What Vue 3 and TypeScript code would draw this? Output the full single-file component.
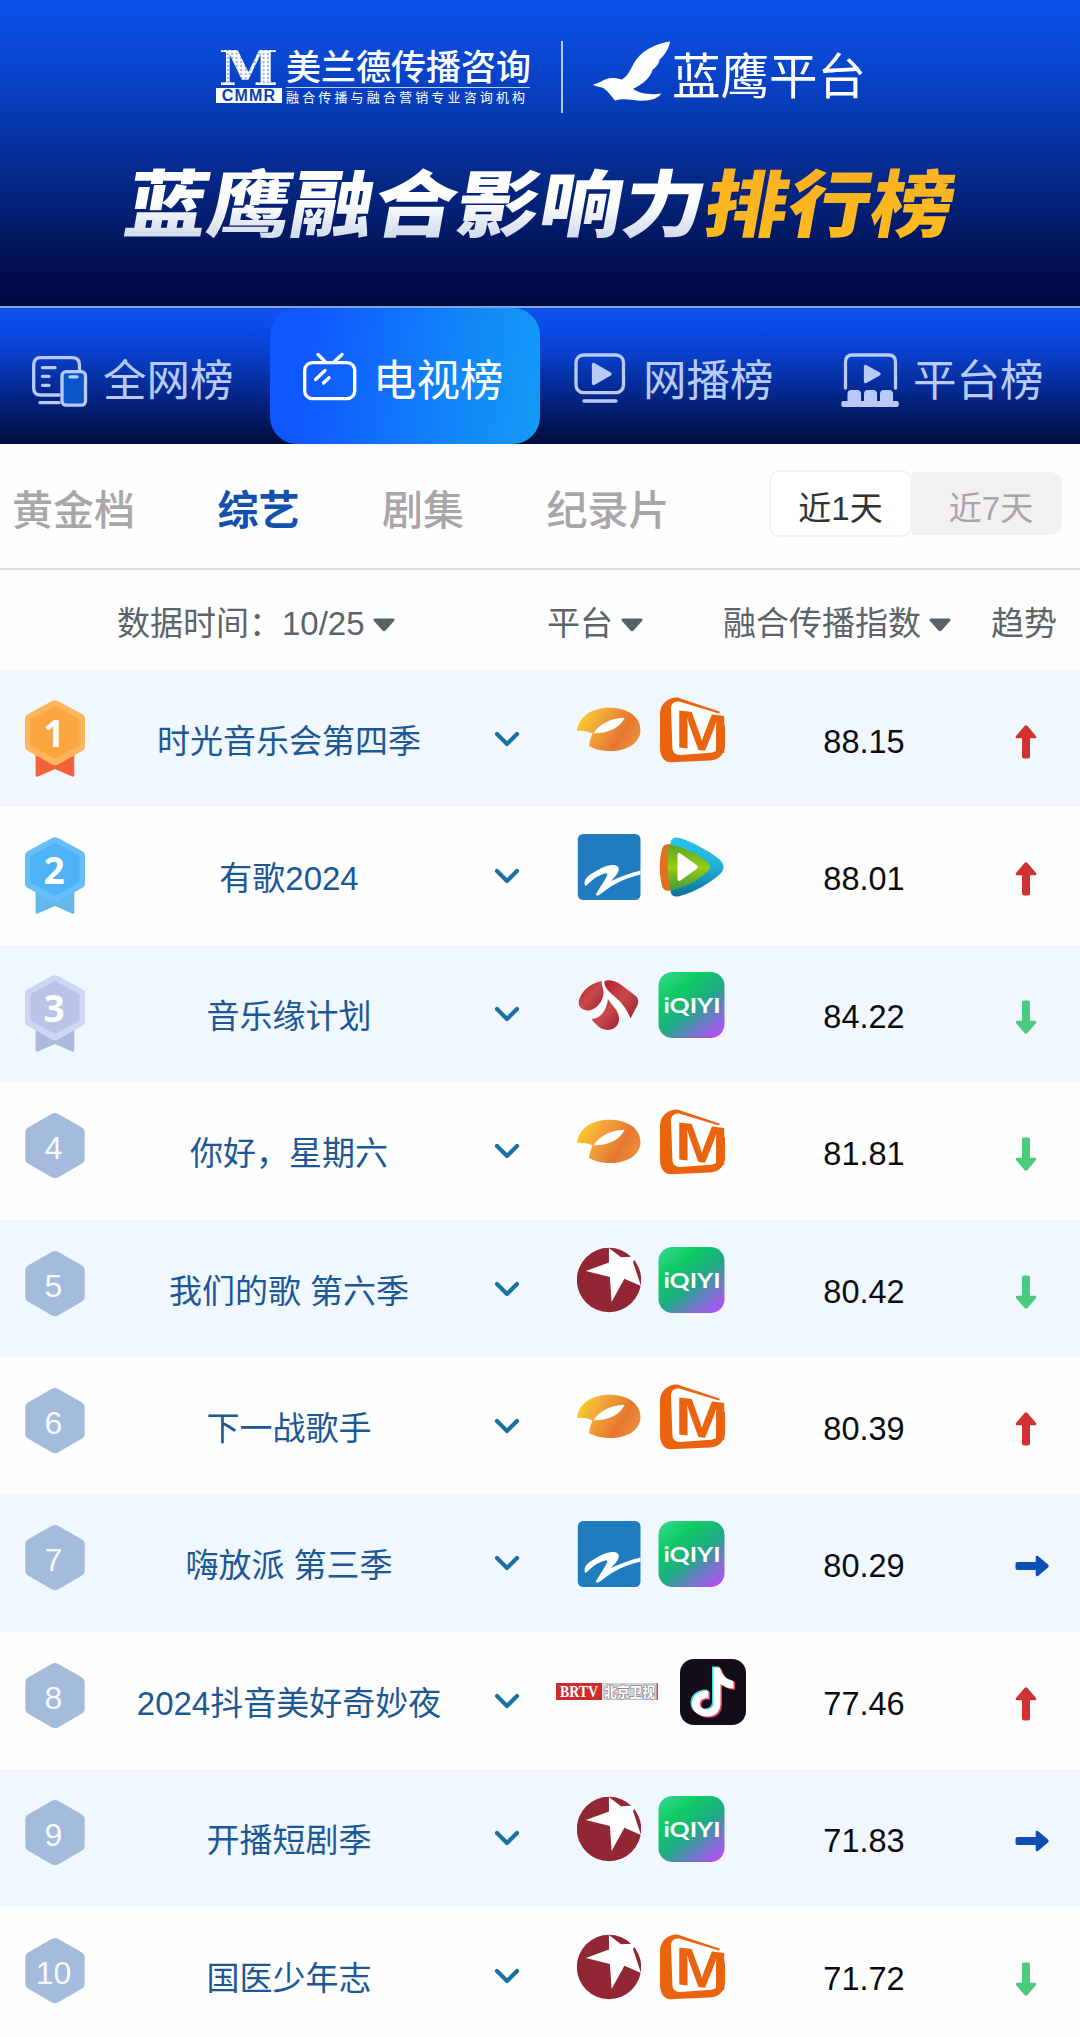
<template>
  <div class="page">
    <!-- Shared gradients -->
    <svg class="defs" width="0" height="0" aria-hidden="true">
      <defs>
        <linearGradient id="g-hunan" x1="0" y1="0.2" x2="1" y2="0.6">
          <stop offset="0" stop-color="#fbd325" />
          <stop offset="0.35" stop-color="#f2a43a" />
          <stop offset="0.75" stop-color="#e5772f" />
          <stop offset="1" stop-color="#ef8d3c" />
        </linearGradient>
        <linearGradient id="g-iqiyi" x1="0.1" y1="0" x2="0.9" y2="1">
          <stop offset="0" stop-color="#35d58c" />
          <stop offset="0.25" stop-color="#0fcc63" />
          <stop offset="0.55" stop-color="#1faa86" />
          <stop offset="0.75" stop-color="#6b7cc4" />
          <stop offset="1" stop-color="#b84cf7" />
        </linearGradient>
        <linearGradient id="g-tx-blue" x1="0" y1="0" x2="0" y2="1">
          <stop offset="0" stop-color="#2cc4e6" />
          <stop offset="0.5" stop-color="#21b0d8" />
          <stop offset="1" stop-color="#0b6f96" />
        </linearGradient>
        <linearGradient id="g-tx-green" x1="0" y1="0" x2="0" y2="1">
          <stop offset="0" stop-color="#57a71c" />
          <stop offset="0.5" stop-color="#98cb14" />
          <stop offset="1" stop-color="#3d9a3c" />
        </linearGradient>
        <linearGradient id="g-anhui" x1="0" y1="0" x2="1" y2="1">
          <stop offset="0" stop-color="#b3202c" />
          <stop offset="0.5" stop-color="#c9484c" />
          <stop offset="1" stop-color="#9c1f2c" />
        </linearGradient>
      </defs>
    </svg>

    <!-- Header -->
    <header class="banner">
      <div class="brands">
        <div class="cmmr">
          <span class="cmmr-m">M</span>
          <span class="cmmr-tag">CMMR</span>
        </div>
        <div class="company">
          <span class="company-name">美兰德传播咨询</span>
          <span class="company-sub">融合传播与融合营销专业咨询机构</span>
        </div>
        <i class="brand-divider"></i>
        <svg class="eagle" viewBox="0 0 80 62" width="80" height="62">
          <path fill="#fff" d="M78 1.500C66 3 53 9 45.500 18C39 26 38 35 30 39.500C24 37.500 17 37 12 40C8 42 5 44 0.800 44.500C4 47 9 46.500 12 48.500C17 52 19 56 23 60.500C34 57 42 61.500 54 60.500C61 60 66 58 69.500 53.500C60 55 48 54 41 49C51 44 58 38 60.500 30C66 25 67 23 67.500 19.500C73 15 77 8 78 1.500Z" />
        </svg>
        <span class="platform-name">蓝鹰平台</span>
      </div>
      <h1><span class="silver">蓝鹰融合影响力</span><span class="gold">排行榜</span></h1>
    </header>

    <!-- Main tabs -->
    <nav class="main-tabs">
      <div
        v-for="tab in mainTabs"
        :key="tab.key"
        :class="['main-tab', { active: tab.key === activeMain }]"
        @click="activeMain = tab.key"
      >
        <svg class="tab-icon" viewBox="0 0 60 56" width="60" height="56">
          <g v-if="tab.key === 'all'">
            <path d="M29 43H10.500Q3.700 43 3.700 36V13Q3.700 5.700 10.500 5.700H42Q49.500 5.700 49.500 13V18M12.500 15.700H25M12.500 24.300H19M12.500 33.300H19M10 50.700H29" />
            <rect x="32" y="19.700" width="23.500" height="33.500" rx="4" fill="#0b56c6" />
            <path d="M40 24.800H47" />
          </g>
          <g v-else-if="tab.key === 'tv'">
            <rect x="4.700" y="10.600" width="50" height="36" rx="7.500" />
            <path d="M18 2.500L25 9.500M42 2.500L34.500 9.500M25 18.500L15.500 27.500M29 25.700L23.500 31" />
          </g>
          <g v-else-if="tab.key === 'web'">
            <rect x="6" y="3" width="47.500" height="37.700" rx="7.500" />
            <path d="M14 49H46" />
            <path class="solid" d="M23.500 12.500L40 22L23.500 31.500Z" />
          </g>
          <g v-else>
            <path d="M5.500 36V10Q5.500 3 12.500 3H48.500Q55.500 3 55.500 10V36" />
            <path class="solid" d="M25.500 14.500L39 22L25.500 29.500Z" />
            <path class="fill" d="M7.500 50V42Q7.500 38 11.500 38H17Q21 38 21 42V50ZM24 50V42Q24 38 28 38H33Q37 38 37 42V50ZM40 50V42Q40 38 44 38H49Q53 38 53 42V50Z" />
            <rect class="fill" x="1.300" y="49" width="57.500" height="6" rx="2" />
          </g>
        </svg>
        <span class="tab-label">{{ tab.label }}</span>
      </div>
    </nav>

    <!-- Category tabs -->
    <section class="sub-bar">
      <div class="sub-tabs">
        <span
          v-for="name in categories"
          :key="name"
          :class="['sub-tab', { active: name === activeCategory }]"
          @click="activeCategory = name"
        >{{ name }}</span>
      </div>
      <div class="range">
        <button
          v-for="days in [1, 7]"
          :key="days"
          :class="{ active: days === range }"
          @click="range = days"
        >近{{ days }}天</button>
      </div>
    </section>

    <!-- Table header -->
    <div class="table-head">
      <div>数据时间：<span>10/25</span><svg class="caret" viewBox="0 0 22 14"><path :d="caret" /></svg></div>
      <div>平台<svg class="caret" viewBox="0 0 22 14"><path :d="caret" /></svg></div>
      <div>融合传播指数<svg class="caret" viewBox="0 0 22 14"><path :d="caret" /></svg></div>
      <div>趋势</div>
    </div>

    <!-- Ranking -->
    <div class="ranking">
      <div v-for="(show, i) in shows" :key="show.title" class="row">
        <div class="rank">
          <svg v-if="i < 3" viewBox="0 0 60 78" width="60" height="78">
            <path :fill="medals[i].ribbon" d="M10.600 52H49.300V76Q48 77.500 46 76L30 69L14 76Q11.500 77.500 10.600 76Z" />
            <path :fill="medals[i].edge" d="M27 1Q30 -0.500 33 1L57 14Q60 15.500 60 19V46Q60 49.500 57 51L33 64.500Q30 66 27 64.500L3 51Q0 49.500 0 46V19Q0 15.500 3 14Z" />
            <path :fill="medals[i].face" d="M30 6L54.500 19V45.500L30 59L5.500 45.500V19Z" />
            <text class="medal-num" x="29" y="46.500">{{ i + 1 }}</text>
          </svg>
          <svg v-else viewBox="0 0 60 78" width="60" height="78">
            <path fill="#a4bbdb" d="M27 1.800Q30 0.300 33 1.800L57 15.500Q59.700 17 59.700 20V47Q59.700 50 57 51.500L33 65.500Q30 67 27 65.500L3 51.500Q0.300 50 0.300 47V20Q0.300 17 3 15.500Z" />
            <text class="hex-num" x="28.500" y="47">{{ i + 1 }}</text>
          </svg>
        </div>
        <div class="title">{{ show.title }}</div>
        <div class="expand">
          <svg viewBox="0 0 26 16" width="26" height="16"><path d="M3 3L13 13L23 3" /></svg>
        </div>
        <div class="logos">
          <template v-for="logo in show.logos" :key="logo">
            <svg v-if="logo === 'hunan'" class="logo narrow" viewBox="0 0 64 67">
              <path d="M16.500 36.300C22 27 34 21 47.400 20.700C44 30 32 36.500 16.500 36.300Z" fill="#fff" />
              <path fill="url(#g-hunan)" fill-rule="evenodd" d="M0 34C2 18 16 10.700 33 10.700C51 10.700 63.500 20 63.500 33C63.500 46 50 54 34 54C25 54 17 52 12 49C12.500 44 14 40 15.500 36.500C10 34 5 33.500 0 34ZM16.500 36.300C32 36.500 44 30 47.400 20.700C34 21 22 27 16.500 36.300Z" />
            </svg>

            <svg v-else-if="logo === 'mango'" class="logo" viewBox="0 0 67 67">
              <path d="M20 3L58 16L64 22V48L54 60L14 62L6 50V12Z" fill="#fff" />
              <text class="mango-m" transform="translate(17 50) skewY(7)" textLength="53.500" lengthAdjust="spacingAndGlyphs">M</text>
              <path fill="#ea6410" d="M62 14.700L21 1C15 -1 2 4 2 17V51C2 59 6 65.300 13 65.300L52 63.500C62 63 67 56 67 48V28L62 31V46C62 51 59 55 53 55.700L22 58C17 58 14.600 55 14.400 51L13 12C13 7 16 4 21 4.600L61 16.500Z" />
            </svg>

            <svg v-else-if="logo === 'zhejiang'" class="logo narrow" viewBox="0 0 64 67">
              <rect x="0.800" width="62.700" height="66" rx="5.500" fill="#1f7cbe" />
              <path fill="#fff" d="M7.800 51C6.500 45 11 41.500 19 37C27 32.500 33 30 39 31.500C43.500 33 42 38 38.500 42L34 47C42 43.500 52 39 63.500 36.500V40.500C51 43.500 42 47.500 34 52.500C28 56.500 25 59.500 21 61.500C19.500 62 18.500 61.200 19.300 59.500L28 45.500C30 42 31.500 39.800 29 39.300C22 40.500 15 46 10.500 50.500C9.500 51.800 8 52 7.800 51Z" />
            </svg>

            <svg v-else-if="logo === 'tencent'" class="logo" viewBox="0 0 67 67">
              <path fill="url(#g-tx-blue)" d="M12.500 9C13 4 17 2.500 22 4C37 9 51 17 61 25C67 30 67 36 61 41C51 49.500 37 58 22 62C17 63.500 13 62 12.500 57C10 41 10 25 12.500 9Z" />
              <path fill="#e2701e" d="M4 15C5 11 8 9.500 12.500 10.500L22 14V53L12.500 56.500C8 57.500 5 56 4 52C1 40 1 27 4 15Z" />
              <path fill="url(#g-tx-green)" d="M11 10.500C26 13 39 20 49 28C53 31 53 35 49 38C39 47 26 54 13 56.500C9 42 9 24 11 10.500Z" />
              <path fill="#fff" d="M19.500 21C19.500 19 21 18.500 22.500 19.500L38.500 31C40 32.300 40 34 38.500 35L22.500 46.500C21 47.500 19.500 47 19.500 45Z" />
            </svg>

            <svg v-else-if="logo === 'anhui'" class="logo narrow" viewBox="0 0 64 67">
              <path d="M25 10L28 9L36 24L53 44L40 46L20 48L12 42L26 34Z" fill="#fff" />
              <g fill="url(#g-anhui)">
                <path d="M25 9C14 11 4 19 1.800 29C0.500 36 8 40 14 38C22 35 27 27 26.500 19C26 15 24 13 25 9Z" />
                <path d="M27.500 9.500C31 7 38 9 43 12L59 24C61.500 27 62 30 60 34L53.500 46.500C50 37 44 30 37 24C31 19 26.500 14 27.500 9.500Z" />
                <path d="M31 27C35 34 42 38 42 47C42 54 36 58.500 30 58C23 57 19 53 14.500 47C22 47 29 41 31 27Z" />
              </g>
            </svg>

            <svg v-else-if="logo === 'iqiyi'" class="logo" viewBox="0 0 67 67">
              <rect x="0.500" width="66" height="66" rx="14" fill="url(#g-iqiyi)" />
              <text class="iqiyi-text" x="5.500" y="41.300" textLength="57" lengthAdjust="spacingAndGlyphs">iQIYI</text>
            </svg>

            <svg v-else-if="logo === 'dragon'" class="logo narrow" viewBox="0 0 64 67">
              <circle cx="32" cy="33" r="32.200" fill="#912734" />
              <path fill="#fff" d="M31.900 1L44 10.200L59 9.500L56 15L64 39L47.400 31.700L34.600 55L32.900 30L8.800 24L32 15.500Z" />
            </svg>

            <svg v-else-if="logo === 'brtv'" class="logo brtv" viewBox="0 0 102 17">
              <rect width="102" height="17" fill="#d2d2d4" />
              <rect width="46" height="17" fill="#cf2b2c" />
              <rect x="100.500" width="1.500" height="17" fill="#cf4b4c" />
              <text class="brtv-text" x="4" y="14" textLength="38" lengthAdjust="spacingAndGlyphs">BRTV</text>
              <text class="brtv-cn" x="48" y="13.700" textLength="51" lengthAdjust="spacingAndGlyphs">北京卫视</text>
            </svg>

            <svg v-else class="logo" viewBox="0 0 67 67">
              <rect width="66" height="66" rx="14" fill="#130d18" />
              <path :d="note" transform="translate(-1.500 -1)" fill="#38dfe0" />
              <path :d="note" transform="translate(1.500 1.200)" fill="#ee3f5f" />
              <path :d="note" fill="#fff" />
            </svg>
          </template>
        </div>
        <div class="score">{{ show.score.toFixed(2) }}</div>
        <div :class="['trend', show.trend]">
          <svg viewBox="0 0 22 34" width="22" height="34">
            <path d="M9.500 1Q11 -0.300 12.500 1L21 11Q22 13 20 13.300H15V31.500Q15 33.500 13 33.500H9Q7 33.500 7 31.500V13.300H2Q0 13 1 11Z" />
          </svg>
        </div>
      </div>
    </div>
  </div>
</template>

<script setup lang="ts">
import { ref } from 'vue'

interface Show {
  title: string
  logos: string[]
  score: number
  trend: 'up' | 'down' | 'flat'
}

const mainTabs = [
  { key: 'all', label: '全网榜' },
  { key: 'tv', label: '电视榜' },
  { key: 'web', label: '网播榜' },
  { key: 'platform', label: '平台榜' }
]
const categories = ['黄金档', '综艺', '剧集', '纪录片']

const activeMain = ref('tv')
const activeCategory = ref('综艺')
const range = ref(1)

const medals = [
  { face: '#fba63f', edge: '#fdb65c', ribbon: '#f4623a' },
  { face: '#4eb2f7', edge: '#66bff9', ribbon: '#64b9ea' },
  { face: '#b9c4e6', edge: '#cfd6f3', ribbon: '#acb9dc' }
]

// Shapes drawn more than once
const caret = 'M2 0.5H20Q22.5 1 21 3L12.5 12.5Q11 14 9.5 12.5L1 3Q-0.5 1 2 0.5Z'
const note =
  'M33.5 8.5H40C42 16 46.5 21 53.5 22V29.500C49 29.5 45 28 40.5 25V44C40.5 53 35 57.5 27.5 57.5C18 57.5 12 52 12 44.5C12 36 20 31 28.500 31.5V39.5C23.500 38.7 20 41 20 44.8C20 48 23 50.5 26.500 50.5C31 50.5 33.5 47.5 33.5 43.5Z'

const shows = ref<Show[]>([
  { title: '时光音乐会第四季', logos: ['hunan', 'mango'], score: 88.15, trend: 'up' },
  { title: '有歌2024', logos: ['zhejiang', 'tencent'], score: 88.01, trend: 'up' },
  { title: '音乐缘计划', logos: ['anhui', 'iqiyi'], score: 84.22, trend: 'down' },
  { title: '你好，星期六', logos: ['hunan', 'mango'], score: 81.81, trend: 'down' },
  { title: '我们的歌 第六季', logos: ['dragon', 'iqiyi'], score: 80.42, trend: 'down' },
  { title: '下一战歌手', logos: ['hunan', 'mango'], score: 80.39, trend: 'up' },
  { title: '嗨放派 第三季', logos: ['zhejiang', 'iqiyi'], score: 80.29, trend: 'flat' },
  { title: '2024抖音美好奇妙夜', logos: ['brtv', 'douyin'], score: 77.46, trend: 'up' },
  { title: '开播短剧季', logos: ['dragon', 'iqiyi'], score: 71.83, trend: 'flat' },
  { title: '国医少年志', logos: ['dragon', 'mango'], score: 71.72, trend: 'down' }
])
</script>

<style>
body {
  margin: 0;
  background: #fefefe;
}
</style>

<style scoped>
.page {
  width: 1080px;
  height: 2037px;
  overflow: hidden;
  background: #fefefe;
  font-family: 'Liberation Sans', 'Noto Sans CJK SC', sans-serif;
}

.defs {
  position: absolute;
}

/* Header */
.banner {
  box-sizing: border-box;
  height: 308px;
  padding-top: 40px;
  border-bottom: 2px solid #7fa5d8;
  background: linear-gradient(#0b52ea 0, #0845cc 70px, #0636a8 130px, #04237a 200px, #020f50 265px, #020a44 306px);
  color: #fff;
}

.brands {
  display: flex;
  height: 73px;
  padding-left: 216px;
}

.cmmr {
  display: flex;
  flex-direction: column;
  align-items: center;
  width: 66px;
  padding-top: 10px;
}

.cmmr-m {
  height: 38px;
  font: 700 48px/36px 'DejaVu Serif', serif;
  transform: scaleX(1.12);
  background: radial-gradient(circle, #fff 1.6px, rgba(255, 255, 255, 0.6) 2.2px) 0 0 / 4px 4px;
  -webkit-background-clip: text;
  background-clip: text;
  color: transparent;
}

.cmmr-tag {
  width: 66px;
  height: 15px;
  background: #fff;
  color: #0a3fb8;
  font: 700 16px/16px 'Liberation Sans', sans-serif;
  letter-spacing: 1.2px;
  text-align: center;
}

.company {
  display: flex;
  flex-direction: column;
  width: 244px;
  margin-left: 4px;
  padding-top: 7px;
}

.company-name {
  height: 40px;
  border-bottom: 1px solid rgba(255, 255, 255, 0.75);
  font-size: 35px;
  font-weight: 500;
  line-height: 41px;
  white-space: nowrap;
}

.company-sub {
  margin-top: 2px;
  font-size: 13px;
  line-height: 15px;
  letter-spacing: 3.15px;
  white-space: nowrap;
}

.brand-divider {
  width: 2px;
  height: 72px;
  margin: 1px 0 0 31px;
  background: rgba(255, 255, 255, 0.7);
}

.eagle {
  margin-left: 29px;
}

.platform-name {
  font-size: 48.5px;
  line-height: 75px;
  font-weight: 400;
}

h1 {
  display: flex;
  margin: 43px 0 0 126px;
  width: 740px;
  font-size: 73px;
  line-height: 100px;
  font-weight: 900;
  white-space: nowrap;
  transform: scaleX(1.135) skewX(-9deg);
  transform-origin: 0 50%;
}

.silver,
.gold {
  background: linear-gradient(#fff 45%, #d3dcec 80%);
  -webkit-background-clip: text;
  background-clip: text;
  color: transparent;
}

.gold {
  background-image: linear-gradient(#fbb024, #fdbc1d);
}

/* Main tabs */
.main-tabs {
  display: flex;
  height: 136px;
  background: linear-gradient(#1052e8 0, #094cec 18px, #0840cc 45px, #052c98 78px, #031a66 108px, #020b3e 136px);
}

.main-tab {
  display: flex;
  align-items: center;
  gap: 13px;
  box-sizing: border-box;
  width: 270px;
  padding-left: 30px;
  border-radius: 27px;
  color: #b9caf7;
  font-size: 43.500px;
  line-height: 60px;
}

.main-tab.active {
  background: linear-gradient(97deg, #0f58ff 15%, #1287f8 70%, #129bf5);
  color: #fff;
}

.tab-icon {
  margin-bottom: -7px;
  fill: none;
  stroke: currentColor;
  stroke-width: 3.3;
  stroke-linecap: round;
  stroke-linejoin: round;
}

.tab-icon .solid,
.tab-icon .fill {
  fill: currentColor;
}

.tab-icon .fill {
  stroke: none;
}

.tab-label {
  margin-top: 10px;
}

/* Category tabs */
.sub-bar {
  display: flex;
  justify-content: space-between;
  box-sizing: border-box;
  height: 126px;
  padding: 26px 18px 0 12px;
  border-bottom: 2px solid #dfdfe1;
}

.sub-tabs {
  display: flex;
  gap: 82.500px;
  font-size: 41px;
  font-weight: 500;
  line-height: 83px;
  color: #a8a6a8;
}

.sub-tab.active {
  color: #1450ae;
  font-weight: 700;
}

.range {
  display: flex;
  align-items: center;
  height: 66px;
}

.range button {
  width: 150px;
  height: 63px;
  margin: 0;
  padding: 5px 0 0 8px;
  border: 0;
  border-radius: 0 12px 12px 0;
  background: #f2f0f1;
  color: #a9a6a9;
  font: 33px 'Liberation Sans', 'Noto Sans CJK SC', sans-serif;
}

.range button.active {
  box-sizing: border-box;
  width: 143px;
  height: 67px;
  padding-left: 0;
  border: 2px solid #f3f3f4;
  border-radius: 10px;
  background: #fff;
  color: #333;
}

/* Table header */
.table-head {
  display: grid;
  grid-template-columns: 430px 176px 268px 1fr;
  box-sizing: border-box;
  height: 100px;
  padding-left: 117px;
  font-size: 33px;
  line-height: 108px;
  color: #5b6468;
  white-space: nowrap;
}

.caret {
  width: 22px;
  height: 14px;
  margin-left: 8px;
  vertical-align: 3px;
  fill: #566266;
}

/* Ranking */
.row {
  display: grid;
  grid-template-columns: 108px 362px 74px 214px 212px 110px;
  height: 137.4px;
}

.row:nth-child(odd) {
  background: #f0f7fe;
}

.rank {
  padding: 30px 0 0 24.500px;
}

.medal-num {
  fill: #fff;
  font: 700 37px 'Open Sans', sans-serif;
  text-anchor: middle;
}

.hex-num {
  fill: #f7faff;
  font: 32px 'Liberation Sans', sans-serif;
  text-anchor: middle;
}

.title {
  font-size: 33px;
  line-height: 144px;
  text-align: center;
  color: #1c5796;
  white-space: nowrap;
}

.expand {
  padding-top: 61px;
  text-align: center;
  line-height: 0;
}

.expand path {
  fill: none;
  stroke: #1b6fa3;
  stroke-width: 4.2;
  stroke-linecap: round;
  stroke-linejoin: round;
}

.logos {
  display: flex;
  justify-content: center;
  gap: 17px;
  padding-top: 27px;
}

.logo {
  width: 67px;
  height: 67px;
}

.logo.narrow {
  width: 64px;
}

.logo.brtv {
  width: 102px;
  height: 17px;
  margin: 24px 5px 0 0;
}

.mango-m {
  fill: #ea6410;
  font: 700 54px 'Liberation Sans', sans-serif;
}

.iqiyi-text {
  fill: #fff;
  font: 700 21px 'Lato', sans-serif;
}

.brtv-text {
  fill: #fff;
  font: 700 16px 'Liberation Serif', serif;
}

.brtv-cn {
  fill: #fff;
  stroke: #8b8b8f;
  stroke-width: 1.4;
  paint-order: stroke;
  font: 700 14px 'Noto Sans CJK SC', sans-serif;
}

.score {
  font-size: 32.500px;
  line-height: 145px;
  text-align: center;
  color: #0c0c10;
}

.trend {
  padding: 55px 0 0 44.500px;
  line-height: 0;
  fill: #d0332f;
}

.trend.down {
  fill: #4acb7d;
}

.trend.down svg {
  transform: rotate(180deg);
}

.trend.flat {
  padding-left: 50.500px;
  fill: #0d4fb5;
}

.trend.flat svg {
  transform: rotate(90deg);
}
</style>
